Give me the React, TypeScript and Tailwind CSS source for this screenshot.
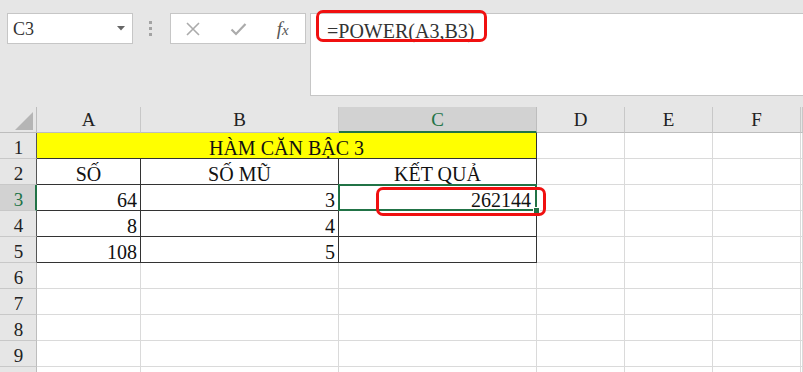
const COLS = ["A", "B", "C", "D", "E", "F", "G"];

type Row = { a?: string; b?: string; c?: string };

const rows: Row[] = [
  {},
  { a: "SỐ", b: "SỐ MŨ", c: "KẾT QUẢ" },
  { a: "64", b: "3", c: "262144" },
  { a: "8", b: "4" },
  { a: "108", b: "5" },
  {},
  {},
  {},
  {},
  {},
];

const SERIF = "font-['Liberation_Serif','Times_New_Roman',serif]";

const cellBase =
  "box-border border-r border-b flex items-end leading-[20px] text-[20px] text-[#111] whitespace-nowrap";

function FormulaBar() {
  return (
    <div className="flex items-start h-[96px] pt-[13px]">
      {/* name box */}
      <div className="ml-[7px] w-[126px] h-[31px] box-border bg-white border border-[#c6c6c6] flex items-center justify-between pl-[5px] pr-[7px]">
        <span className={`${SERIF} text-[18px] leading-none text-[#333]`}>C3</span>
        <svg width="8" height="5" viewBox="0 0 8 5">
          <polygon points="0,0 8,0 4,4.5" fill="#666" />
        </svg>
      </div>
      {/* grip dots */}
      <div className="ml-[16px] mt-[8px] flex flex-col gap-[3px]">
        <div className="w-[3px] h-[3px] bg-[#a3a3a3]" />
        <div className="w-[3px] h-[3px] bg-[#a3a3a3]" />
        <div className="w-[3px] h-[3px] bg-[#a3a3a3]" />
      </div>
      {/* cancel / enter / fx */}
      <div className="ml-[18px] w-[136px] h-[31px] box-border bg-white border border-[#c6c6c6] flex items-center">
        <div className="w-[45px] flex justify-center">
          <svg width="16" height="16" viewBox="0 0 16 16">
            <path d="M2 2 L14 14 M14 2 L2 14" stroke="#ababab" strokeWidth="1.6" fill="none" />
          </svg>
        </div>
        <div className="w-[45px] flex justify-center">
          <svg width="17" height="14" viewBox="0 0 17 14">
            <path d="M1.5 7.5 L6 12 L15.5 2" stroke="#ababab" strokeWidth="2.2" fill="none" />
          </svg>
        </div>
        <div className="w-[45px] flex justify-center">
          <span className={`${SERIF} italic text-[19px] leading-none text-[#555]`}>
            f<span className="text-[15px]">x</span>
          </span>
        </div>
      </div>
      {/* formula input */}
      <div className="ml-[4px] flex-1 h-[83px] box-border bg-white border-l border-b border-t border-[#c6c6c6] pl-[16px] pt-[5px]">
        <span className={`${SERIF} text-[20px] leading-[24px] text-[#333]`}>=POWER(A3,B3)</span>
      </div>
    </div>
  );
}

function ColumnHeaders() {
  return (
    <>
      <div className="box-border border-r border-b border-[#bdbdbd] bg-[#e6e6e6] flex items-end justify-end pr-[3px] pb-[2px]">
        <svg width="18" height="18" viewBox="0 0 18 18">
          <polygon points="0,18 18,0 18,18" fill="#b5b5b5" />
        </svg>
      </div>
      {COLS.map((c) =>
        c === "C" ? (
          <div
            key={c}
            className="box-border border-r border-r-[#bdbdbd] border-b-2 border-b-[#217346] bg-[#d2d2d2] flex items-end justify-center pb-[1px] text-[19px] leading-[20px] text-[#217346]"
          >
            {c}
          </div>
        ) : (
          <div
            key={c}
            className="box-border border-r border-r-[#c8c8c8] border-b border-b-[#bdbdbd] bg-[#e6e6e6] flex items-end justify-center pb-[2px] text-[19px] leading-[20px] text-[#222]"
          >
            {c === "G" ? "" : c}
          </div>
        )
      )}
    </>
  );
}

function RowHeader({ n }: { n: number }) {
  if (n === 3) {
    return (
      <div className="box-border border-r-2 border-r-[#217346] border-b border-b-[#c8c8c8] bg-[#d2d2d2] flex items-end justify-center pl-[2px] text-[19px] leading-[20px] text-[#217346]">
        {n}
      </div>
    );
  }
  return (
    <div
      className={
        n <= 5
          ? "box-border border-r border-r-[#555] border-b border-b-[#c8c8c8] bg-[#e6e6e6] flex items-end justify-center pl-[1px] text-[19px] leading-[20px] text-[#222]"
          : "box-border border-r border-r-[#bdbdbd] border-b border-b-[#c8c8c8] bg-[#e6e6e6] flex items-end justify-center pl-[1px] text-[19px] leading-[20px] text-[#222]"
      }
    >
      {n < 10 ? n : ""}
    </div>
  );
}

function Sheet() {
  return (
    <div className="grid grid-cols-[37px_104px_198px_198px_88px_88px_88px_1fr] auto-rows-[26px] bg-white">
      <ColumnHeaders />
      {rows.map((r, i) => {
        const n = i + 1;
        const inTable = n <= 5;
        const tableCell = `${cellBase} border-[#333]`;
        const plainCell = `${cellBase} border-[#dadada]`;
        return (
          <div key={n} className="contents">
            <RowHeader n={n} />
            {n === 1 ? (
              <div className={`${tableCell} col-span-3 bg-[#ffff00] justify-center`}>
                HÀM CĂN BẬC 3
              </div>
            ) : (
              <>
                <div
                  className={`${inTable ? tableCell : plainCell} ${n === 2 ? "justify-center" : "justify-end pr-[3px]"}`}
                >
                  {r.a}
                </div>
                <div
                  className={`${inTable ? tableCell : plainCell} ${n === 2 ? "justify-center" : "justify-end pr-[3px]"}`}
                >
                  {r.b}
                </div>
                {n === 3 ? (
                  <div className={`${tableCell} relative justify-end pr-[5px]`}>
                    {r.c}
                    <div className="absolute -top-px -left-px right-[-1px] bottom-[-1px] border-2 border-[#217346] z-10" />
                    <div className="absolute right-[-4px] bottom-[-4px] w-[7px] h-[7px] bg-[#217346] border border-white z-20" />
                  </div>
                ) : (
                  <div className={`${inTable ? tableCell : plainCell} justify-center`}>
                    {r.c}
                  </div>
                )}
              </>
            )}
            <div className={plainCell} />
            <div className={plainCell} />
            <div className={plainCell} />
            <div className={plainCell} />
          </div>
        );
      })}
    </div>
  );
}

export default function App() {
  return (
    <div className={`relative w-[803px] h-[372px] overflow-hidden bg-[#e6e6e6] ${SERIF}`}>
      <FormulaBar />
      <div className="h-[11px]" />
      <Sheet />
      {/* red annotation boxes */}
      <div className="absolute left-[316px] top-[10px] w-[171px] h-[32px] border-[3px] border-[#f01010] rounded-[7px] pointer-events-none" />
      <div className="absolute left-[376px] top-[187px] w-[170px] h-[29px] border-[3px] border-[#f01010] rounded-[7px] pointer-events-none z-30" />
    </div>
  );
}
